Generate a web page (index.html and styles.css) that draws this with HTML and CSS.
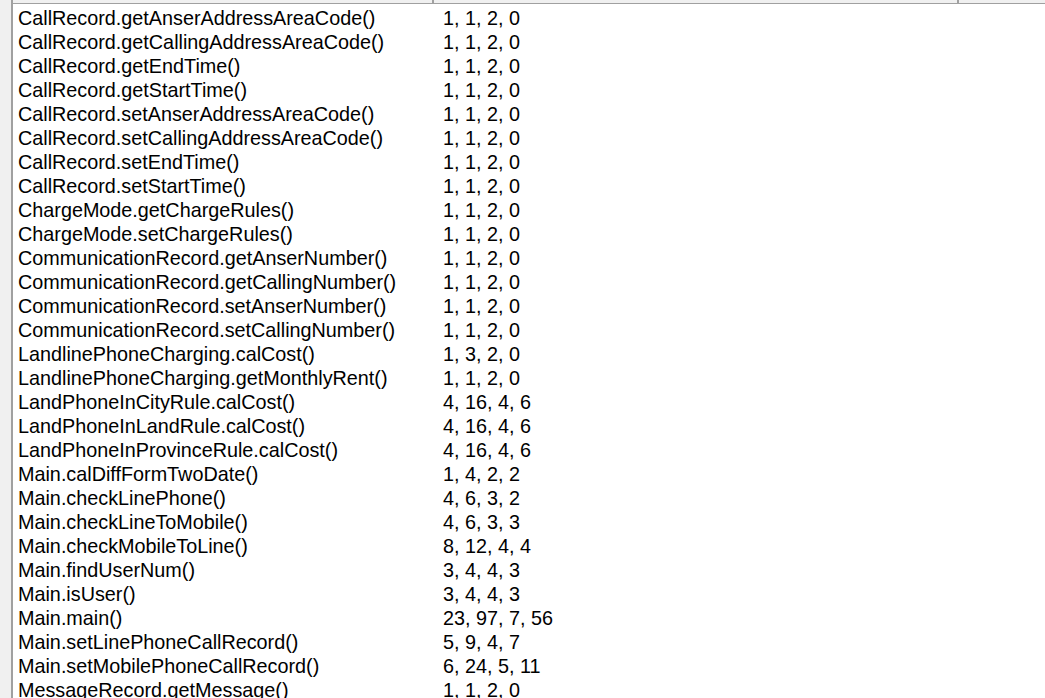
FILE: index.html
```html
<!DOCTYPE html>
<html lang="en">
<head>
    <meta charset="UTF-8">
    <title>Metrics</title>
    <link rel="stylesheet" href="styles.css">
</head>
<body>
    <div class="frame">
        <div class="list">
            <div class="header">
                <div class="col name"></div>
                <div class="col value"></div>
                <div class="col rest"></div>
            </div>
            <div class="rows">
                <div class="row"><span class="name">CallRecord.getAnserAddressAreaCode()</span><span class="value">1, 1, 2, 0</span></div>
                <div class="row"><span class="name">CallRecord.getCallingAddressAreaCode()</span><span class="value">1, 1, 2, 0</span></div>
                <div class="row"><span class="name">CallRecord.getEndTime()</span><span class="value">1, 1, 2, 0</span></div>
                <div class="row"><span class="name">CallRecord.getStartTime()</span><span class="value">1, 1, 2, 0</span></div>
                <div class="row"><span class="name">CallRecord.setAnserAddressAreaCode()</span><span class="value">1, 1, 2, 0</span></div>
                <div class="row"><span class="name">CallRecord.setCallingAddressAreaCode()</span><span class="value">1, 1, 2, 0</span></div>
                <div class="row"><span class="name">CallRecord.setEndTime()</span><span class="value">1, 1, 2, 0</span></div>
                <div class="row"><span class="name">CallRecord.setStartTime()</span><span class="value">1, 1, 2, 0</span></div>
                <div class="row"><span class="name">ChargeMode.getChargeRules()</span><span class="value">1, 1, 2, 0</span></div>
                <div class="row"><span class="name">ChargeMode.setChargeRules()</span><span class="value">1, 1, 2, 0</span></div>
                <div class="row"><span class="name">CommunicationRecord.getAnserNumber()</span><span class="value">1, 1, 2, 0</span></div>
                <div class="row"><span class="name">CommunicationRecord.getCallingNumber()</span><span class="value">1, 1, 2, 0</span></div>
                <div class="row"><span class="name">CommunicationRecord.setAnserNumber()</span><span class="value">1, 1, 2, 0</span></div>
                <div class="row"><span class="name">CommunicationRecord.setCallingNumber()</span><span class="value">1, 1, 2, 0</span></div>
                <div class="row"><span class="name">LandlinePhoneCharging.calCost()</span><span class="value">1, 3, 2, 0</span></div>
                <div class="row"><span class="name">LandlinePhoneCharging.getMonthlyRent()</span><span class="value">1, 1, 2, 0</span></div>
                <div class="row"><span class="name">LandPhoneInCityRule.calCost()</span><span class="value">4, 16, 4, 6</span></div>
                <div class="row"><span class="name">LandPhoneInLandRule.calCost()</span><span class="value">4, 16, 4, 6</span></div>
                <div class="row"><span class="name">LandPhoneInProvinceRule.calCost()</span><span class="value">4, 16, 4, 6</span></div>
                <div class="row"><span class="name">Main.calDiffFormTwoDate()</span><span class="value">1, 4, 2, 2</span></div>
                <div class="row"><span class="name">Main.checkLinePhone()</span><span class="value">4, 6, 3, 2</span></div>
                <div class="row"><span class="name">Main.checkLineToMobile()</span><span class="value">4, 6, 3, 3</span></div>
                <div class="row"><span class="name">Main.checkMobileToLine()</span><span class="value">8, 12, 4, 4</span></div>
                <div class="row"><span class="name">Main.findUserNum()</span><span class="value">3, 4, 4, 3</span></div>
                <div class="row"><span class="name">Main.isUser()</span><span class="value">3, 4, 4, 3</span></div>
                <div class="row"><span class="name">Main.main()</span><span class="value">23, 97, 7, 56</span></div>
                <div class="row"><span class="name">Main.setLinePhoneCallRecord()</span><span class="value">5, 9, 4, 7</span></div>
                <div class="row"><span class="name">Main.setMobilePhoneCallRecord()</span><span class="value">6, 24, 5, 11</span></div>
                <div class="row"><span class="name">MessageRecord.getMessage()</span><span class="value">1, 1, 2, 0</span></div>
            </div>
        </div>
    </div>
</body>
</html>
```

FILE: styles.css
```css
html, body {
    margin: 0;
    padding: 0;
    height: 100%;
    overflow: hidden;
}
body {
    background-color: #f0f0f0;
    font-family: 'Liberation Sans', Arial, sans-serif;
    color: #000000;
}
.frame {
    padding-left: 11px;
    height: 100%;
    box-sizing: border-box;
}
.list {
    background-color: #ffffff;
    border-left: 2px solid #a0a0a0;
    height: 100%;
    overflow: hidden;
}
.header {
    display: flex;
    height: 3px;
    background-color: #f0f0f0;
    border-bottom: 1px solid #a0a0a0;
}
.header .col {
    border-right: 2px solid #a0a0a0;
    box-sizing: border-box;
}
.header .name { width: 421px; }
.header .value { width: 525px; }
.header .rest { flex: 1; border-right: none; }
.rows {
    padding-top: 2px;
}
.row {
    display: flex;
    height: 24px;
    line-height: 24px;
    font-size: 19.8px;
    white-space: nowrap;
}
.row .name {
    width: 425px;
    padding-left: 5px;
}
```
